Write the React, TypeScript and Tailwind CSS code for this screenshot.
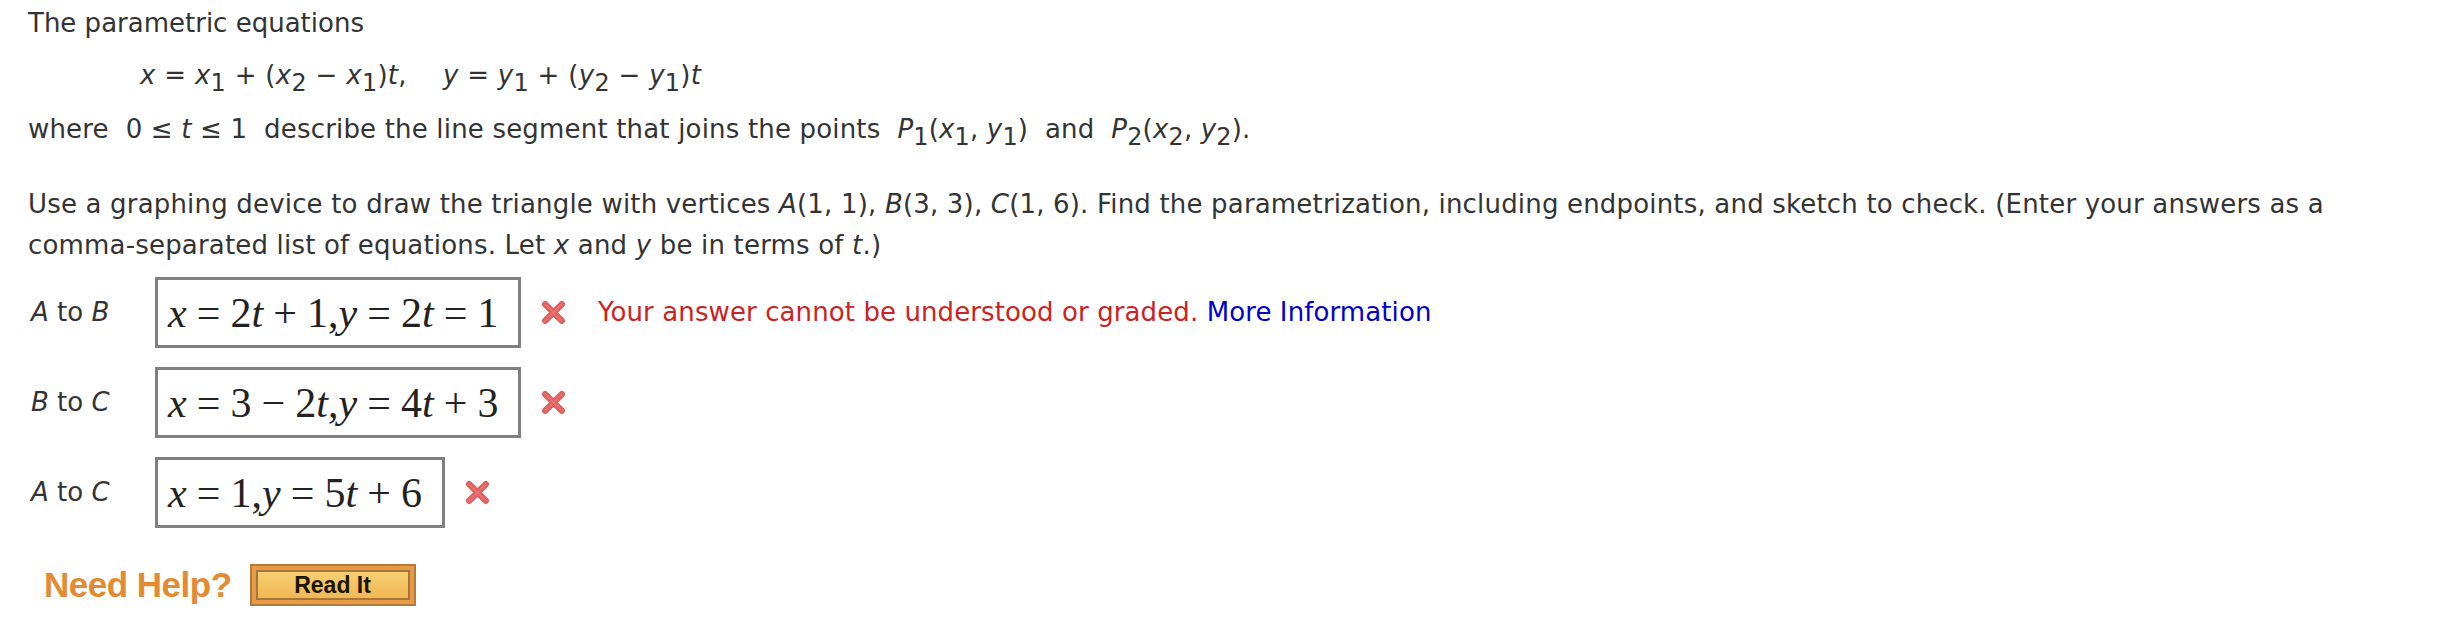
import React from 'react';

const sans = { fontFamily: '"DejaVu Sans", Verdana, sans-serif' };
const serif = { fontFamily: '"Liberation Serif", "DejaVu Serif", serif' };

function V({ children }: { children: React.ReactNode }) {
    return <i>{children}</i>;
}

function Sub({ children }: { children: React.ReactNode }) {
    return <sub className="text-[0.92em] not-italic relative top-[0.28em]">{children}</sub>;
}

function Op({ children }: { children: React.ReactNode }) {
    return <span className="mx-[0.24em]">{children}</span>;
}

// red cross shown next to a wrong answer
function WrongMark() {
    return (
        <svg width="25" height="25" viewBox="0 0 24 24" className="shrink-0">
            <path d="M4 4 L20 20 M20 4 L4 20" stroke="#e35d5d" strokeWidth="6" strokeLinecap="round" />
            <path d="M4 4 L20 20 M20 4 L4 20" stroke="#ee7d7d" strokeWidth="2" strokeLinecap="round" opacity="0.6" />
        </svg>
    );
}

function AnswerBox({ children }: { children: React.ReactNode }) {
    return (
        <div className="h-[71px] border-[3px] border-[#808080] bg-white px-[10px] flex items-center text-[42px] text-[#222] leading-none whitespace-nowrap" style={serif}>
            {children}
        </div>
    );
}

export default function App() {
    const rows = [
        {
            label: (<><V>A</V> to <V>B</V></>),
            answer: (
                <>
                    <V>x</V><Op>=</Op>2<V>t</V><Op>+</Op>1,<V>y</V><Op>=</Op>2<V>t</V><Op>=</Op>1
                </>
            ),
            width: 'w-[366px]',
            error: true,
        },
        {
            label: (<><V>B</V> to <V>C</V></>),
            answer: (
                <>
                    <V>x</V><Op>=</Op>3<Op>−</Op>2<V>t</V>,<V>y</V><Op>=</Op>4<V>t</V><Op>+</Op>3
                </>
            ),
            width: 'w-[366px]',
            error: false,
        },
        {
            label: (<><V>A</V> to <V>C</V></>),
            answer: (
                <>
                    <V>x</V><Op>=</Op>1,<V>y</V><Op>=</Op>5<V>t</V><Op>+</Op>6
                </>
            ),
            width: 'w-[290px]',
            error: false,
        },
    ];

    return (
        <div className="w-[2438px] h-[638px] bg-white text-[#333] text-[26px] overflow-hidden" style={sans}>
            <div className="pl-[28px] pt-[4px]">
                <p className="leading-[38px]">The parametric equations</p>
                <p className="leading-[38px] mt-[14px] pl-[112px] tracking-[0.3px]">
                    <V>x</V> = <V>x</V><Sub>1</Sub> + (<V>x</V><Sub>2</Sub> − <V>x</V><Sub>1</Sub>)<V>t</V>,
                    <span className="inline-block w-[36px]" />
                    <V>y</V> = <V>y</V><Sub>1</Sub> + (<V>y</V><Sub>2</Sub> − <V>y</V><Sub>1</Sub>)<V>t</V>
                </p>
                <p className="leading-[38px] mt-[16px] tracking-[0.18px]">
                    where&nbsp; 0 ≤ <V>t</V> ≤ 1&nbsp; describe the line segment that joins the points&nbsp; <V>P</V><Sub>1</Sub>(<V>x</V><Sub>1</Sub>, <V>y</V><Sub>1</Sub>)&nbsp; and&nbsp; <V>P</V><Sub>2</Sub>(<V>x</V><Sub>2</Sub>, <V>y</V><Sub>2</Sub>).
                </p>
                <p className="leading-[41px] mt-[36px] w-[2340px] tracking-[0.18px]">
                    Use a graphing device to draw the triangle with vertices <V>A</V>(1, 1), <V>B</V>(3, 3), <V>C</V>(1, 6). Find the parametrization, including endpoints, and sketch to check. (Enter your answers as a comma-separated list of equations. Let <V>x</V> and <V>y</V> be in terms of <V>t</V>.)
                </p>

                <div className="mt-[11px] flex flex-col gap-[19px]">
                    {rows.map((row, i) => (
                        <div key={i} className="flex items-center">
                            <div className="w-[127px] pl-[3px] text-[26px]">{row.label}</div>
                            <div className={row.width}>
                                <AnswerBox>{row.answer}</AnswerBox>
                            </div>
                            <div className="ml-[20px] flex items-center">
                                <WrongMark />
                                {row.error && (
                                    <span className="ml-[32px] text-[#cc2222] tracking-[0.1px]">
                                        Your answer cannot be understood or graded. <span className="text-[#0000cc]">More Information</span>
                                    </span>
                                )}
                            </div>
                        </div>
                    ))}
                </div>

                <div className="mt-[31px] flex items-center pl-[16px]" style={{ fontFamily: '"Liberation Sans", Arial, sans-serif' }}>
                    <span className="text-[35px] font-bold text-[#e38a32] tracking-[-0.5px]">Need Help?</span>
                    <button className="ml-[18px] w-[166px] h-[42px] border-[2px] border-[#b57a3a] bg-[#e89b45] p-[4px]">
                        <span className="flex h-full w-full items-center justify-center border-[2px] border-[#a8763c] bg-gradient-to-b from-[#f8cf72] to-[#f0b853] text-[23px] font-bold text-[#1a1400]">
                            Read It
                        </span>
                    </button>
                </div>
            </div>
        </div>
    );
}
